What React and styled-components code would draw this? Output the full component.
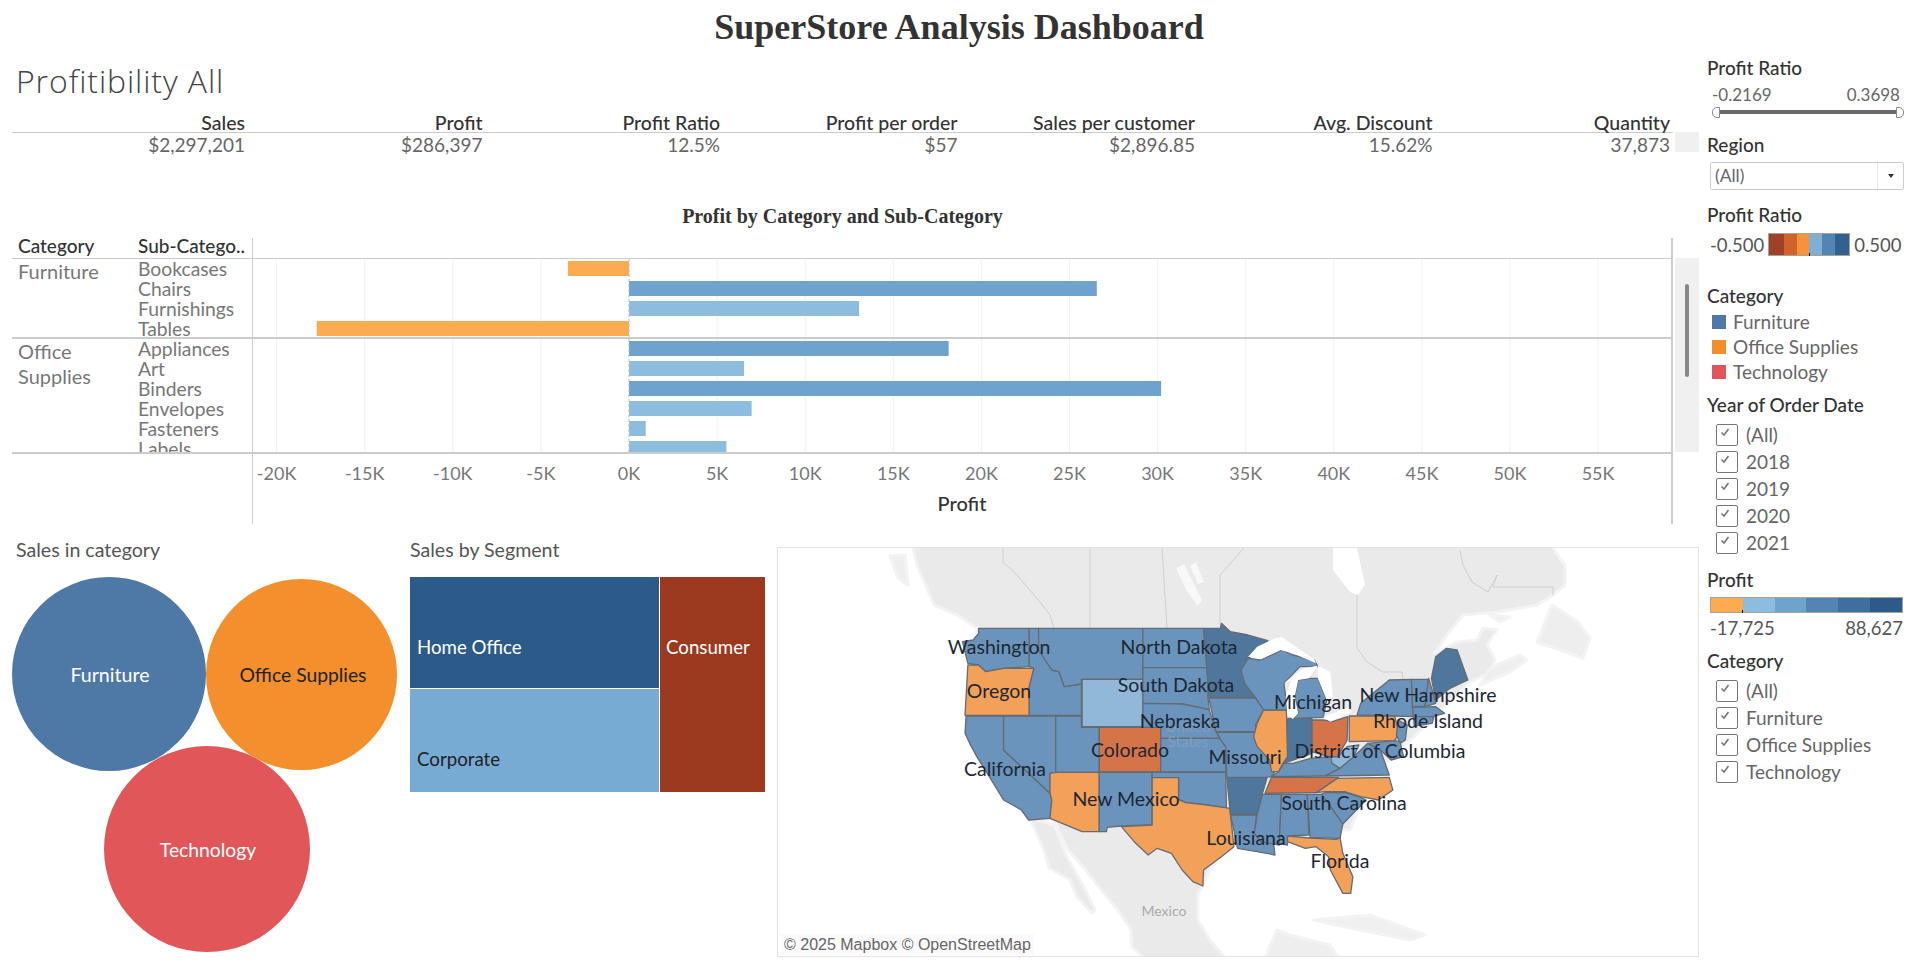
import React from 'react';
import styled, { createGlobalStyle } from 'styled-components';

const FONT = `Lato, "Open Sans", sans-serif`;
const SERIF = `"Liberation Serif", serif`;

const GlobalStyle = createGlobalStyle`
  html, body { margin: 0; padding: 0; background: #fff; }
  body { font-family: ${FONT}; color: #333; overflow: hidden; }
`;

const Page = styled.div`
  width: 1918px;
  height: 963px;
  overflow: hidden;
`;

const Title = styled.h1`
  height: 50px;
  margin: 0;
  text-align: center;
  font: bold 36px/54px ${SERIF};
  color: #333;
`;

const Body = styled.div`
  display: flex;
`;

const Main = styled.main`
  width: 1699px;
  flex: none;
`;

const Heading = styled.h2`
  height: 34px;
  margin: 14px 0 0 16px;
  font: 300 32px/34px "Open Sans", sans-serif;
  letter-spacing: 0.9px;
  color: #444;
`;

const KpiRow = styled.div`
  display: flex;
  margin: 15px 0 0 12px;
`;

const KpiTable = styled.div`
  width: 1661px;
`;

const KpiLine = styled.div`
  display: grid;
  grid-template-columns: 233px repeat(6, 237.5px);
  height: 19px;
  line-height: ${p => (p.$head ? 19 : 23)}px;
  font-size: ${p => (p.$head ? 19.5 : 19)}px;
  text-align: right;
  color: ${p => (p.$head ? '#333' : '#666')};
  font-weight: ${p => (p.$head ? 500 : 400)};
  border-bottom: ${p => (p.$head ? '1px solid #ccc' : 'none')};
`;

const KpiScroll = styled.div`
  width: 24px;
  height: 20px;
  margin: 19px 0 0 2px;
  background: #f0f0f0;
`;

const ChartTitle = styled.h3`
  width: 1661px;
  height: 24px;
  margin: 52px 0 0 12px;
  text-align: center;
  font: bold 20px/24px ${SERIF};
  color: #333;
`;

const ChartRow = styled.div`
  display: flex;
  margin: 10px 0 0 12px;
`;

const ChartWrap = styled.div`
  width: 1661px;
  flex: none;
`;

const ChartHead = styled.div`
  display: flex;
  height: 20px;
  border-bottom: 1px solid #ccc;
  font-size: 19px;
  line-height: 16px;
  font-weight: 500;
  color: #333;
`;

const HeadCell = styled.div`
  width: 120px;
  padding-left: 6px;
  box-sizing: border-box;
`;

const HeadPlot = styled.div`
  flex: 1;
  border-left: 1px solid #ccc;
  border-right: 2px solid #ccc;
`;

const ChartBody = styled.div`
  display: flex;
  height: 193px;
  overflow: hidden;
  border-bottom: 2px solid #ccc;
`;

const RowHeaders = styled.div`
  width: 240px;
  flex: none;
`;

const RowGroup = styled.div`
  display: flex;
  height: ${p => p.$h}px;
  border-bottom: ${p => (p.$rule ? '2px solid #ccc' : 'none')};
  box-sizing: border-box;
`;

const GroupName = styled.div`
  width: 120px;
  padding-left: 6px;
  box-sizing: border-box;
  font-size: 20px;
  line-height: 25px;
  color: #777;
`;

const SubName = styled.div`
  height: 20px;
  padding-left: 6px;
  font-size: 19.3px;
  line-height: 20px;
  color: #777;
`;

const PlotSvg = styled.svg`
  display: block;
  flex: none;
  font-family: ${FONT};
`;

const AxisRow = styled.div`
  display: flex;
  height: 70px;
`;

const AxisSpacer = styled.div`
  width: 240px;
  flex: none;
`;

const ChartScroll = styled.div`
  display: flex;
  justify-content: center;
  width: 24px;
  height: 194px;
  margin: 20px 0 0 2px;
  padding-top: 26px;
  box-sizing: border-box;
  background: #f0f0f0;
  &::after {
    content: '';
    width: 4px;
    height: 93px;
    border-radius: 2px;
    background: #888;
  }
`;

const Bottom = styled.div`
  display: flex;
  margin-top: 23px;
  height: 410px;
`;

const Panel = styled.section`
  width: ${p => p.$w}px;
  flex: none;
  padding-left: ${p => p.$pad}px;
  box-sizing: border-box;
`;

const PanelTitle = styled.div`
  height: 39px;
  margin-top: -9px;
  padding-left: ${p => p.$left || 0}px;
  font-size: 19.6px;
  line-height: 24px;
  color: #555;
`;

const Treemap = styled.div`
  display: grid;
  grid-template-columns: 249px 105px;
  grid-template-rows: 111px 103px;
  gap: 1px;
`;

const Tile = styled.div`
  grid-row: ${p => p.$row || 'auto'};
  padding: ${p => p.$top}px 0 0 ${p => p.$left || 7}px;
  background: ${p => p.$bg};
  color: ${p => p.$fg};
  font-size: 18.7px;
  line-height: 22px;
  box-sizing: border-box;
`;

const MapBox = styled.div`
  position: relative;
  width: 922px;
  height: 410px;
  box-sizing: border-box;
  border: 1px solid #e4e4e4;
  overflow: hidden;
`;

const MapSvg = styled.svg`
  position: absolute;
  left: -1px;
  top: -1px;
  font-family: ${FONT};
`;

const State = styled.polygon`
  stroke: #656b72;
  stroke-width: 1.3;
  vector-effect: non-scaling-stroke;
  stroke-linejoin: round;
`;

const Land = styled.polygon`
  fill: ${p => p.$fill || '#eaeaea'};
  stroke: #f3f3f3;
  stroke-width: 3;
  stroke-linejoin: round;
`;

const Attribution = styled.div`
  position: absolute;
  left: 3px;
  bottom: 1px;
  padding: 0 3px;
  background: #fafafa;
  color: #666;
  font: 16px/21px "Liberation Sans", sans-serif;
`;

const Sidebar = styled.aside`
  width: 219px;
  flex: none;
  padding: 7px 0 0 8px;
  box-sizing: border-box;
`;

const FilterLabel = styled.div`
  height: 22px;
  margin-top: ${p => p.$mt || 0}px;
  font-size: 19px;
  line-height: 22px;
  font-weight: 500;
  color: #333;
`;

const RangeValues = styled.div`
  display: flex;
  justify-content: space-between;
  width: 188px;
  height: 18px;
  margin: 7px 0 0 5px;
  font-size: 17px;
  line-height: 18px;
  color: #666;
`;

const Slider = styled.div`
  display: flex;
  align-items: center;
  width: 192px;
  height: 12px;
  margin: 2px 0 0 5px;
`;

const Handle = styled.span`
  width: 8px;
  height: 11px;
  flex: none;
  box-sizing: border-box;
  border: 1px solid #888;
  background: #fff;
  border-radius: ${p => (p.$right ? '0 5px 5px 0' : '5px 0 0 5px')};
`;

const Track = styled.span`
  flex: 1;
  height: 4px;
  background: #6a6a6a;
`;

const Select = styled.div`
  display: flex;
  width: 194px;
  height: 28px;
  margin: 6px 0 0 3px;
  box-sizing: border-box;
  border: 1px solid #ccc;
  border-radius: 2px;
  font-size: 17.5px;
  line-height: 26px;
  color: #666;
`;

const SelectText = styled.div`
  flex: 1;
  padding-left: 4px;
`;

const SelectArrow = styled.div`
  display: flex;
  align-items: center;
  justify-content: center;
  width: 25px;
  border-left: 1px solid #e6e6e6;
  &::after {
    content: '';
    border: 3.5px solid transparent;
    border-top: 4px solid #333;
    border-bottom: none;
  }
`;

const RampRow = styled.div`
  display: flex;
  align-items: center;
  gap: 4px;
  height: 23px;
  margin: 7px 0 0 3px;
  font-size: 18.5px;
  color: #555;
`;

const Ramp = styled.div`
  position: relative;
  display: flex;
  width: ${p => p.$w}px;
  height: ${p => p.$h}px;
  flex: none;
  box-sizing: border-box;
  border: 1px solid #a8a296;
  margin-left: ${p => p.$ml || 0}px;
  margin-top: ${p => p.$mt || 0}px;
`;

const RampStep = styled.span`
  flex: ${p => p.$grow} 0 0;
  background: ${p => p.$c};
`;

const RampTick = styled.span`
  position: absolute;
  bottom: -1px;
  left: ${p => p.$x}px;
  width: 1px;
  height: 3px;
  background: #111;
`;

const RampEnds = styled.div`
  display: flex;
  justify-content: space-between;
  width: 193px;
  height: 18px;
  margin: 6px 0 0 3px;
  font-size: 18.5px;
  line-height: 18px;
  color: #555;
`;

const LegendRow = styled.div`
  display: flex;
  align-items: center;
  gap: 7px;
  height: 25px;
  margin-left: 5px;
  margin-top: ${p => p.$mt || 0}px;
  font-size: 19px;
  color: #666;
`;

const Swatch = styled.span`
  width: 14px;
  height: 14px;
  background: ${p => p.$c};
`;

const CheckRow = styled.div`
  display: flex;
  align-items: center;
  gap: 8px;
  height: 27px;
  margin-left: 9px;
  font-size: 19px;
  color: #666;
`;

const CheckBox = styled.span`
  display: block;
  width: 22px;
  height: 22px;
  box-sizing: border-box;
  border: 1px solid #777;
  border-radius: 2px;
`;

const CheckGroup = styled.div`
  margin-top: ${p => p.$mt}px;
`;

const rows1 = ['Bookcases', 'Chairs', 'Furnishings', 'Tables'];
const rows2 = ['Appliances', 'Art', 'Binders', 'Envelopes', 'Fasteners', 'Labels'];

const ORANGE = '#fdab50';
const MID = '#6da3cd';
const LIGHT = '#8dbdde';
const ZERO = 377;
const PER_K = 88.1 / 5;

// profit in K, per row
const bars = [
  [-3.47, ORANGE], [26.55, MID], [13.06, LIGHT], [-17.72, ORANGE],
  [18.14, MID], [6.53, LIGHT], [30.2, MID], [6.96, LIGHT], [0.95, LIGHT], [5.53, LIGHT],
];

const ticks = [-20, -15, -10, -5, 0, 5, 10, 15, 20, 25, 30, 35, 40, 45, 50, 55];

function Plot() {
  return (
    <PlotSvg width="1421" height="193" viewBox="0 0 1421 193">
      <line x1="0.5" y1="0" x2="0.5" y2="193" stroke="#ccc" />
      <line x1="1420" y1="0" x2="1420" y2="193" stroke="#ccc" strokeWidth="2" />
      {ticks.map(t => t !== 0 && (
        <line key={t} x1={ZERO + t * PER_K} y1="0" x2={ZERO + t * PER_K} y2="193" stroke="#f1f1f1" />
      ))}
      {bars.map(([v, c], i) => {
        const w = Math.abs(v) * PER_K;
        const top = 2 + i * 20;
        return <rect key={i} x={v < 0 ? ZERO - w : ZERO} y={top} width={w} height="15" fill={c} />;
      })}
      <line x1={ZERO} y1="0" x2={ZERO} y2="193" stroke="#bbb" strokeDasharray="3 2" />
      <line x1="0" y1="79" x2="1421" y2="79" stroke="#ccc" strokeWidth="2" />
    </PlotSvg>
  );
}

function Axis() {
  return (
    <PlotSvg width="1421" height="70" viewBox="0 0 1421 70">
      <line x1="0.5" y1="0" x2="0.5" y2="70" stroke="#ccc" />
      <line x1="1420" y1="0" x2="1420" y2="70" stroke="#ccc" strokeWidth="2" />
      {ticks.map(t => (
        <text key={t} x={ZERO + t * PER_K} y="26" fontSize="18" textAnchor="middle" fill="#777">{t}K</text>
      ))}
      <text x="710" y="57" fontSize="20" fontWeight="500" textAnchor="middle" fill="#333">Profit</text>
    </PlotSvg>
  );
}

function Bubbles() {
  return (
    <PlotSvg width="398" height="380" viewBox="0 577 398 380">
      <circle cx="109" cy="674" r="97" fill="#4e79a7" />
      <circle cx="301.5" cy="674.5" r="95.5" fill="#f48f2d" />
      <circle cx="207" cy="849" r="103" fill="#e15759" />
      <text x="110" y="682" fontSize="19.6" textAnchor="middle" fill="#fff">Furniture</text>
      <text x="303" y="682" fontSize="19.3" textAnchor="middle" fill="#222">Office Supplies</text>
      <text x="208" y="857" fontSize="19.3" textAnchor="middle" fill="#fff">Technology</text>
    </PlotSvg>
  );
}

const BLUE = '#6a94bc';
const DARK = '#4f769b';
const ORG = '#f3a058';
const DORG = '#d67449';
const PALE = '#8fb8d9';

// state outlines, traced in map crop units (x / 2.8, y / 3 from 900,600)
const states = [
  [BLUE, '220,85 362,85 362,200 290,205 240,215 220,195 190,190 175,125 205,120 220,100'],
  [ORG, '190,195 220,195 240,215 290,205 375,205 362,260 362,346 182,346 185,290'],
  [BLUE, '185,348 290,348 290,450 420,580 425,600 420,655 360,660 340,630 290,600 250,530 215,470 195,430 182,400'],
  [BLUE, '290,348 436,348 436,517 420,520 420,580 290,450'],
  [BLUE, '362,85 388,85 388,150 425,210 445,215 460,260 508,252 508,346 362,346 362,260 375,205 362,200'],
  [BLUE, '388,85 680,85 680,238 508,238 508,252 460,260 445,215 425,210 388,150'],
  [PALE, '510,238 680,238 680,380 510,380'],
  [BLUE, '436,348 508,348 508,382 558,382 558,517 436,517'],
  [ORG, '436,517 558,517 558,695 510,695 420,655 425,600 420,580 420,520'],
  [DORG, '558,382 730,382 730,516 558,516'],
  [BLUE, '558,517 706,517 706,675 620,678 580,682 578,695 558,695'],
  [BLUE, '680,85 850,85 862,203 680,203'],
  [BLUE, '680,203 862,203 862,290 866,330 850,325 790,312 680,310'],
  [BLUE, '680,310 790,312 850,325 866,330 885,395 895,415 730,415 730,382 680,382'],
  [BLUE, '730,415 895,415 912,440 912,516 730,516'],
  [BLUE, '706,517 912,517 914,625 860,615 800,608 780,598 780,533 706,533'],
  [ORG, '706,533 780,533 780,598 800,608 860,615 924,625 930,690 935,740 900,770 850,810 848,858 820,845 790,810 760,760 720,745 695,765 660,730 620,680 706,675'],
  [DARK, '850,85 897,85 900,70 925,95 975,105 1030,122 985,165 955,210 965,250 995,292 865,292'],
  [BLUE, '865,294 995,294 1018,330 995,375 1000,395 885,395 875,345'],
  [BLUE, '888,397 1000,397 1010,425 1035,480 1050,515 1040,530 1025,532 915,532 912,440 895,415'],
  [DARK, '915,533 1028,533 1015,580 1000,643 925,643'],
  [BLUE, '925,645 998,645 992,700 1045,720 1050,765 1000,755 945,745 935,690'],
  [BLUE, '1015,583 1068,583 1062,735 1010,725 992,700 1000,645'],
  [BLUE, '1068,583 1140,583 1145,705 1085,708 1085,735 1062,730'],
  [BLUE, '1140,583 1180,583 1200,610 1240,672 1232,715 1148,712'],
  [ORG, '1085,708 1148,714 1222,718 1232,712 1240,760 1268,830 1262,880 1240,880 1205,810 1200,770 1165,740 1135,745 1085,725'],
  [BLUE, '1190,578 1245,577 1290,592 1305,600 1240,672 1200,610 1180,583'],
  [ORG, '1165,578 1225,535 1370,532 1380,570 1340,600 1290,590 1245,575 1190,575'],
  [DORG, '1022,580 1040,532 1228,532 1165,578'],
  [BLUE, '1040,530 1060,515 1075,490 1100,490 1150,475 1205,470 1232,505 1190,528'],
  [BLUE, '1190,528 1232,505 1270,470 1310,430 1345,450 1370,525'],
  [PALE, '1205,470 1225,470 1252,440 1285,435 1270,470 1232,505 1210,490'],
  [DORG, '1153,360 1185,360 1210,365 1254,350 1252,420 1225,470 1200,470 1153,455'],
  [DARK, '1086,355 1153,355 1153,460 1075,490'],
  [ORG, '1018,330 1082,330 1085,470 1072,490 1060,515 1040,515 1035,480 1000,440 990,410 1000,370'],
  [BLUE, '975,175 1010,180 1070,150 1100,165 1160,180 1170,200 1120,200 1075,250 1085,330 1018,330 995,292 965,250 955,210'],
  [BLUE, '1115,240 1145,235 1170,235 1195,300 1185,352 1100,355 1115,340 1105,290'],
  [BLUE, '1280,345 1290,310 1370,240 1432,238 1435,320 1438,350 1385,348'],
  [ORG, '1258,348 1385,348 1397,400 1385,422 1258,425'],
  [BLUE, '1432,238 1480,238 1470,320 1435,320'],
  [BLUE, '1480,235 1490,270 1500,310 1470,320'],
  [DARK, '1488,235 1500,170 1530,145 1560,150 1570,180 1590,240 1540,265 1500,300'],
  [BLUE, '1435,322 1500,320 1525,340 1490,350 1437,350'],
  [BLUE, '1438,350 1495,350 1490,370 1440,378'],
  [BLUE, '1395,360 1420,375 1415,420 1400,430 1390,405'],
  [BLUE, '1310,430 1385,422 1400,425 1410,470 1375,480 1345,450'],
];

const lakes = [
  '975,170 1000,140 1050,115 1070,112 1160,178 1165,190 1100,160 1065,150 1010,178',
  '1075,250 1130,205 1170,197 1145,235 1115,240 1105,290 1115,340 1100,357 1085,345 1080,290 1095,240',
  '1170,197 1205,215 1212,290 1195,300 1170,235',
  '1185,352 1260,320 1265,335 1205,365',
];

const mapLabels = [
  ['Washington', 999, 648], ['North Dakota', 1179, 648], ['South Dakota', 1176, 686],
  ['Oregon', 999, 692], ['Nebraska', 1180, 722], ['Colorado', 1130, 751],
  ['California', 1005, 770], ['Missouri', 1245, 758], ['New Mexico', 1126, 800],
  ['Louisiana', 1246, 839], ['South Carolina', 1344, 804], ['Florida', 1340, 862],
  ['Michigan', 1313, 703], ['New Hampshire', 1428, 696], ['Rhode Island', 1428, 722],
  ['District of Columbia', 1380, 752],
];

function UsMap() {
  return (
    <MapSvg width="922" height="410" viewBox="777 547 922 410">
      <Land points="912,545 1550,545 1565,565 1565,585 1553,595 1537,605 1497,612 1463,615 1447,635 1435,653 1457,642 1477,640 1483,628 1497,630 1487,645 1495,660 1490,672 1470,682 1400,750 1370,780 1350,830 1290,830 1225,840 1202,887 1198,893 1198,920 1210,940 1227,960 1146,960 1132,947 1131,930 1120,913 1103,892 1084,868 1068,850 1054,820 1029,817 1000,790 975,740 968,700 977,628 957,615 934,605 917,565" />
      <Land points="1029,817 1044,850 1049,868 1070,880 1077,897 1092,913 1095,910 1084,887 1067,857 1054,825" />
      <Land $fill="#eeeeee" points="1552,605 1537,642 1583,658 1590,638 1578,622" />
      <Land $fill="#eeeeee" points="1490,668 1520,655 1527,660 1510,672 1480,685" />
      <Land $fill="#eeeeee" points="1490,615 1510,617 1500,622" />
      <Land $fill="#eeeeee" points="890,556 905,555 908,585 898,578" />
      <Land $fill="#eeeeee" points="1264,960 1277,930 1290,935 1330,945 1340,960" />
      <Land $fill="#f0f0f0" points="1314,920 1370,915 1425,935 1410,940 1350,928" />
      <polygon fill="#fff" points="1333,548 1357,548 1365,585 1358,595 1350,592 1333,570" />
      <polygon fill="#f8f8f8" points="1176,568 1184,564 1202,600 1198,606 1186,590" />
      <polygon fill="#f8f8f8" points="1190,566 1196,562 1204,582 1198,584" />
      <polyline fill="none" stroke="#cfcfcf" points="1003,548 1003,562 1017,575 1040,602 1050,615 1054,628" />
      <line x1="1090" y1="548" x2="1090" y2="628" stroke="#cfcfcf" />
      <polyline fill="none" stroke="#cfcfcf" points="1162,548 1167,628" />
      <polyline fill="none" stroke="#cfcfcf" points="1244,548 1220,575 1220,625" />
      <polyline fill="none" stroke="#cfcfcf" points="1357,595 1357,648 1367,662 1383,672 1402,672 1403,680" />
      <polyline fill="none" stroke="#cfcfcf" points="1460,550 1463,565 1472,582 1488,592 1497,575 1493,587 1553,587 1553,595" />
      <g transform="translate(900 600) scale(0.35714 0.33333)">
        {states.map(([fill, points], i) => <State key={i} fill={fill} points={points} />)}
        {lakes.map((points, i) => <polygon key={i} fill="#fff" points={points} />)}
      </g>
      <text x="1188" y="732" fontSize="15" textAnchor="middle" fill="#7f9fbf">United</text>
      <text x="1188" y="747" fontSize="15" textAnchor="middle" fill="#7f9fbf">States</text>
      <text x="1164" y="916" fontSize="14" textAnchor="middle" fill="#aaa">Mexico</text>
      {mapLabels.map(([name, x, y]) => (
        <text key={name} x={x} y={y + 6} fontSize="19.5" textAnchor="middle" fill="#1d2733">{name}</text>
      ))}
    </MapSvg>
  );
}

function Tick() {
  return (
    <svg width="20" height="20" viewBox="0 0 20 20">
      <path d="M4.5 7.5 L7 10 L11.5 4" fill="none" stroke="#777" strokeWidth="1.6" />
    </svg>
  );
}

function CheckItem({ children }) {
  return (
    <CheckRow>
      <CheckBox><Tick /></CheckBox>
      {children}
    </CheckRow>
  );
}

const ratioRamp = [[44, '#9f4028'], [40, '#d2622c'], [38, '#f5933a'], [39, '#7fb0d4'], [39, '#5385b2'], [43, '#31618f']];
const profitRamp = [[95, ORANGE], [98, LIGHT], [93, MID], [96, '#5385b4'], [96, '#3f6f9f'], [97, '#2c5b8a']];

export default function App() {
  return (
    <Page>
      <GlobalStyle />
      <Title>SuperStore Analysis Dashboard</Title>
      <Body>
        <Main>
          <Heading>Profitibility All</Heading>
          <KpiRow>
            <KpiTable>
              <KpiLine $head>
                <span>Sales</span><span>Profit</span><span>Profit Ratio</span><span>Profit per order</span>
                <span>Sales per customer</span><span>Avg. Discount</span><span>Quantity</span>
              </KpiLine>
              <KpiLine>
                <span>$2,297,201</span><span>$286,397</span><span>12.5%</span><span>$57</span>
                <span>$2,896.85</span><span>15.62%</span><span>37,873</span>
              </KpiLine>
            </KpiTable>
            <KpiScroll />
          </KpiRow>

          <ChartTitle>Profit by Category and Sub-Category</ChartTitle>
          <ChartRow>
            <ChartWrap>
              <ChartHead>
                <HeadCell>Category</HeadCell>
                <HeadCell>Sub-Catego..</HeadCell>
                <HeadPlot />
              </ChartHead>
              <ChartBody>
                <RowHeaders>
                  <RowGroup $h={80} $rule>
                    <GroupName>Furniture</GroupName>
                    <div>{rows1.map(r => <SubName key={r}>{r}</SubName>)}</div>
                  </RowGroup>
                  <RowGroup $h={113}>
                    <GroupName>Office<br />Supplies</GroupName>
                    <div>{rows2.map(r => <SubName key={r}>{r}</SubName>)}</div>
                  </RowGroup>
                </RowHeaders>
                <Plot />
              </ChartBody>
              <AxisRow>
                <AxisSpacer />
                <Axis />
              </AxisRow>
            </ChartWrap>
            <ChartScroll />
          </ChartRow>

          <Bottom>
            <Panel $w={398} $pad={0}>
              <PanelTitle $left={16}>Sales in category</PanelTitle>
              <Bubbles />
            </Panel>
            <Panel $w={379} $pad={12}>
              <PanelTitle>Sales by Segment</PanelTitle>
              <Treemap>
                <Tile $bg="#2c5b8a" $fg="#fff" $top={59}>Home Office</Tile>
                <Tile $bg="#9c3a20" $fg="#fff" $top={59} $left={6} $row="span 2">Consumer</Tile>
                <Tile $bg="#78abd3" $fg="#222" $top={59}>Corporate</Tile>
              </Treemap>
            </Panel>
            <MapBox>
              <UsMap />
              <Attribution>© 2025 Mapbox © OpenStreetMap</Attribution>
            </MapBox>
          </Bottom>
        </Main>

        <Sidebar>
          <FilterLabel>Profit Ratio</FilterLabel>
          <RangeValues><span>-0.2169</span><span>0.3698</span></RangeValues>
          <Slider><Handle /><Track /><Handle $right /></Slider>

          <FilterLabel $mt={16}>Region</FilterLabel>
          <Select><SelectText>(All)</SelectText><SelectArrow /></Select>

          <FilterLabel $mt={14}>Profit Ratio</FilterLabel>
          <RampRow>
            <span>-0.500</span>
            <Ramp $w={82} $h={23}>
              {ratioRamp.map(([g, c]) => <RampStep key={c} $grow={g} $c={c} />)}
              <RampTick $x={40} />
            </Ramp>
            <span>0.500</span>
          </RampRow>

          <FilterLabel $mt={29}>Category</FilterLabel>
          <LegendRow $mt={2}><Swatch $c="#4e79a7" />Furniture</LegendRow>
          <LegendRow><Swatch $c="#f28e2b" />Office Supplies</LegendRow>
          <LegendRow><Swatch $c="#e15759" />Technology</LegendRow>

          <FilterLabel $mt={10}>Year of Order Date</FilterLabel>
          <CheckGroup $mt={5}>
            {['(All)', '2018', '2019', '2020', '2021'].map(y => <CheckItem key={y}>{y}</CheckItem>)}
          </CheckGroup>

          <FilterLabel $mt={13}>Profit</FilterLabel>
          <Ramp $w={193} $h={16} $ml={3} $mt={6}>
            {profitRamp.map(([g, c]) => <RampStep key={c} $grow={g} $c={c} />)}
            <RampTick $x={31} />
          </Ramp>
          <RampEnds><span>-17,725</span><span>88,627</span></RampEnds>

          <FilterLabel $mt={13}>Category</FilterLabel>
          <CheckGroup $mt={5}>
            {['(All)', 'Furniture', 'Office Supplies', 'Technology'].map(c => <CheckItem key={c}>{c}</CheckItem>)}
          </CheckGroup>
        </Sidebar>
      </Body>
    </Page>
  );
}
